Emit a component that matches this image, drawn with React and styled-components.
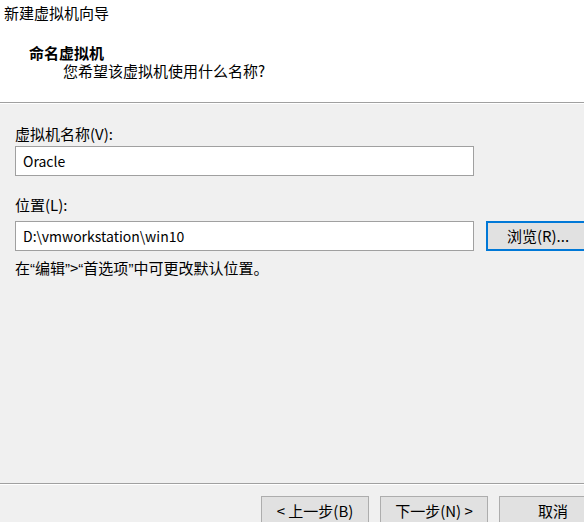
import React from "react";
import styled, { createGlobalStyle } from "styled-components";

const Global = createGlobalStyle`
  html, body { margin: 0; padding: 0; background: #f0f0f0; }
  body { font-family: "Noto Sans CJK SC", "Noto Sans", sans-serif; font-size: 15px; color: #000; }
  * { box-sizing: border-box; }
`;

const Window = styled.div`
  width: 584px;
  height: 522px;
  display: flex;
  flex-direction: column;
  overflow: hidden;
  background: #f0f0f0;
`;

const Header = styled.header`
  flex: 0 0 103px;
  background: #fff;
  border-bottom: 1px solid #a0a0a0;
  box-shadow: 0 1px 0 #ffffff;
  padding: 4px 0 0 4px;
  display: flex;
  flex-direction: column;
`;

const WindowTitle = styled.div`
  line-height: 18px;
`;

const StepTitle = styled.div`
  margin: 22px 0 0 25px;
  line-height: 18px;
  font-weight: bold;
`;

const StepSubtitle = styled.div`
  margin-left: 59px;
  line-height: 18px;
`;

const Body = styled.main`
  flex: 1;
  padding: 22px 0 0 15px;
  display: flex;
  flex-direction: column;
`;

const Label = styled.label`
  display: block;
  line-height: 18px;
  margin-top: ${(p) => p.$top || 0}px;
`;

const Row = styled.div`
  display: flex;
  gap: 12px;
  margin-top: ${(p) => p.$top || 0}px;
  align-items: flex-start;
`;

const TextBox = styled.input`
  width: 459px;
  height: 30px;
  flex-shrink: 0;
  border: 1px solid #a0a0a0;
  background: #fff;
  padding: 0 7px;
  font: inherit;
  font-size: 14px;
  line-height: 26px;
  color: #000;
  outline: none;
`;

const Hint = styled.div`
  line-height: 18px;
  margin-top: 8px;
`;

const Quote = styled.span`
  font-family: "Liberation Sans", sans-serif;
`;

const Button = styled.button`
  flex-shrink: 0;
  width: ${(p) => p.$w || 108}px;
  height: 30px;
  background: #e1e1e1;
  border: ${(p) => (p.$focus ? "2px solid #0078d7" : "1px solid #adadad")};
  font: inherit;
  font-size: 15px;
  line-height: 18px;
  color: #000;
  padding: 0;
  display: flex;
  align-items: center;
  justify-content: center;
  cursor: default;
`;

const Footer = styled.footer`
  flex: 0 0 39px;
  border-top: 1px solid #a0a0a0;
  box-shadow: inset 0 1px 0 #ffffff;
  padding: 12px 0 0 261px;
  display: flex;
  gap: 11px;
  overflow: hidden;
`;

export default function App() {
  return (
    <>
      <Global />
      <Window>
        <Header>
          <WindowTitle>新建虚拟机向导</WindowTitle>
          <StepTitle>命名虚拟机</StepTitle>
          <StepSubtitle>您希望该虚拟机使用什么名称?</StepSubtitle>
        </Header>
        <Body>
          <Label>虚拟机名称(V):</Label>
          <Row $top={3}>
            <TextBox defaultValue="Oracle" />
          </Row>
          <Label $top={20}>位置(L):</Label>
          <Row $top={7}>
            <TextBox defaultValue="D:\vmworkstation\win10" />
            <Button $w={104} $focus>浏览(R)...</Button>
          </Row>
          <Hint>
            在<Quote>“</Quote>编辑<Quote>”</Quote>&gt;<Quote>“</Quote>首选项<Quote>”</Quote>中可更改默认位置。
          </Hint>
        </Body>
        <Footer>
          <Button $w={108}>&lt; 上一步(B)</Button>
          <Button $w={108}>下一步(N) &gt;</Button>
          <Button $w={108}>取消</Button>
        </Footer>
      </Window>
    </>
  );
}
